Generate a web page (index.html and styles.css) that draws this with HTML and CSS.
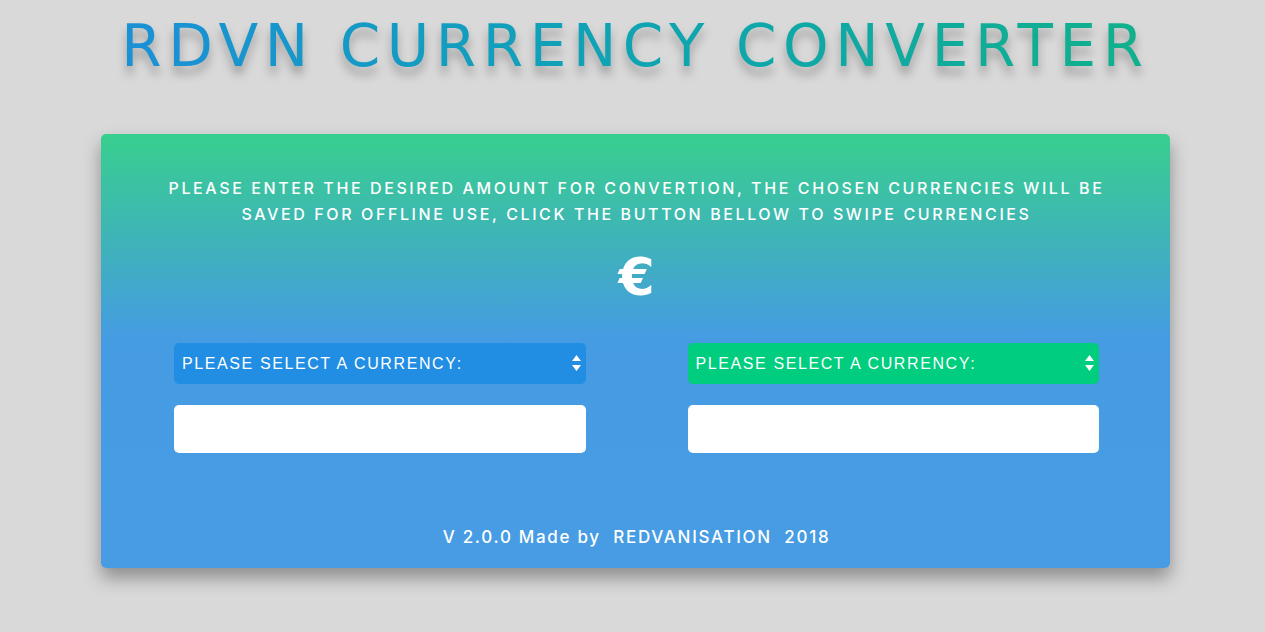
FILE: index.html
```html
<!DOCTYPE html>
<html>
<head>
<meta charset="utf-8">
<link rel="stylesheet" href="styles.css">
</head>
<body>
<h1 class="title">RDVN CURRENCY CONVERTER</h1>
<main class="card">
  <p class="intro">Please enter the desired amount for convertion, the chosen currencies will be saved for offline use, click the button bellow to swipe currencies</p>
  <div class="swap">€</div>
  <div class="columns">
    <div class="col">
      <div class="select-wrap">
        <select class="sel sel-blue"><option>PLEASE SELECT A CURRENCY:</option></select>
        <svg class="arrows" width="9" height="16" viewBox="0 0 9 16"><path d="M4.5 0 L9 6 L0 6 Z M0 10 L9 10 L4.5 16 Z" fill="#fff"/></svg>
      </div>
      <input class="amount" type="text">
    </div>
    <div class="col">
      <div class="select-wrap">
        <select class="sel sel-green"><option>PLEASE SELECT A CURRENCY:</option></select>
        <svg class="arrows" width="9" height="16" viewBox="0 0 9 16"><path d="M4.5 0 L9 6 L0 6 Z M0 10 L9 10 L4.5 16 Z" fill="#fff"/></svg>
      </div>
      <input class="amount" type="text">
    </div>
  </div>
  <footer class="foot">V 2.0.0 Made by&nbsp; REDVANISATION&nbsp; 2018</footer>
</main>
</body>
</html>
```
FILE: styles.css
```css
html, body { margin: 0; padding: 0; }
body {
  background: #d9d9d9;
  font-family: "Inter", "Open Sans", sans-serif;
  display: flex;
  flex-direction: column;
  align-items: center;
  height: 632px;
  overflow: hidden;
  padding-left: 6px;
  box-sizing: border-box;
}
.title {
  margin: 14px 0 0 0;
  font-family: "DejaVu Sans", sans-serif;
  font-size: 58px;
  font-weight: 400;
  letter-spacing: 6.6px;
  line-height: 64px;
  background: linear-gradient(90deg, #1b90d6 0%, #0ea4b2 50%, #11b08c 100%);
  -webkit-background-clip: text;
  background-clip: text;
  color: transparent;
  filter: drop-shadow(0 8px 5px rgba(0,0,0,0.28));
}
.card {
  margin-top: 56px;
  width: 1069px;
  height: 434px;
  box-sizing: border-box;
  border-radius: 5px;
  background: linear-gradient(180deg, #38cf8f 0%, #3fb3b9 25%, #469ce2 47%, #479ce3 100%);
  box-shadow: 0 10px 18px rgba(0,0,0,0.35);
  display: flex;
  flex-direction: column;
  align-items: center;
  padding: 41px 71px 0 73px;
  color: #fff;
}
.intro {
  margin: 0;
  text-transform: uppercase;
  text-align: center;
  font-size: 16px;
  line-height: 26px;
  font-weight: 500;
  letter-spacing: 2.6px;
  width: 960px;
  flex-shrink: 0;
}
.swap {
  margin-top: 22px;
  font-size: 52px;
  font-weight: 700;
  line-height: 56px;
  font-family: "DejaVu Sans", sans-serif;
}
.columns {
  margin-top: 38px;
  display: flex;
  gap: 102px;
  width: 100%;
}
.col {
  flex: 1;
  display: flex;
  flex-direction: column;
  gap: 21px;
}
.select-wrap { position: relative; }
.sel {
  -webkit-appearance: none;
  appearance: none;
  width: 100%;
  height: 41px;
  border: none;
  border-radius: 5px;
  color: #fff;
  font-family: "Liberation Sans", Arial, sans-serif;
  font-size: 16px;
  letter-spacing: 1.6px;
  padding: 0 8px;
  outline: none;
}
.sel-blue { background: #218de3; }
.sel-green { background: #00cd7e; }
.arrows {
  position: absolute;
  right: 5px;
  top: 12px;
}
.amount {
  height: 48px;
  border: none;
  border-radius: 5px;
  background: #fff;
  box-sizing: border-box;
  outline: none;
}
.foot {
  margin-top: 74px;
  font-size: 17px;
  font-weight: 500;
  letter-spacing: 1.7px;
}
```
